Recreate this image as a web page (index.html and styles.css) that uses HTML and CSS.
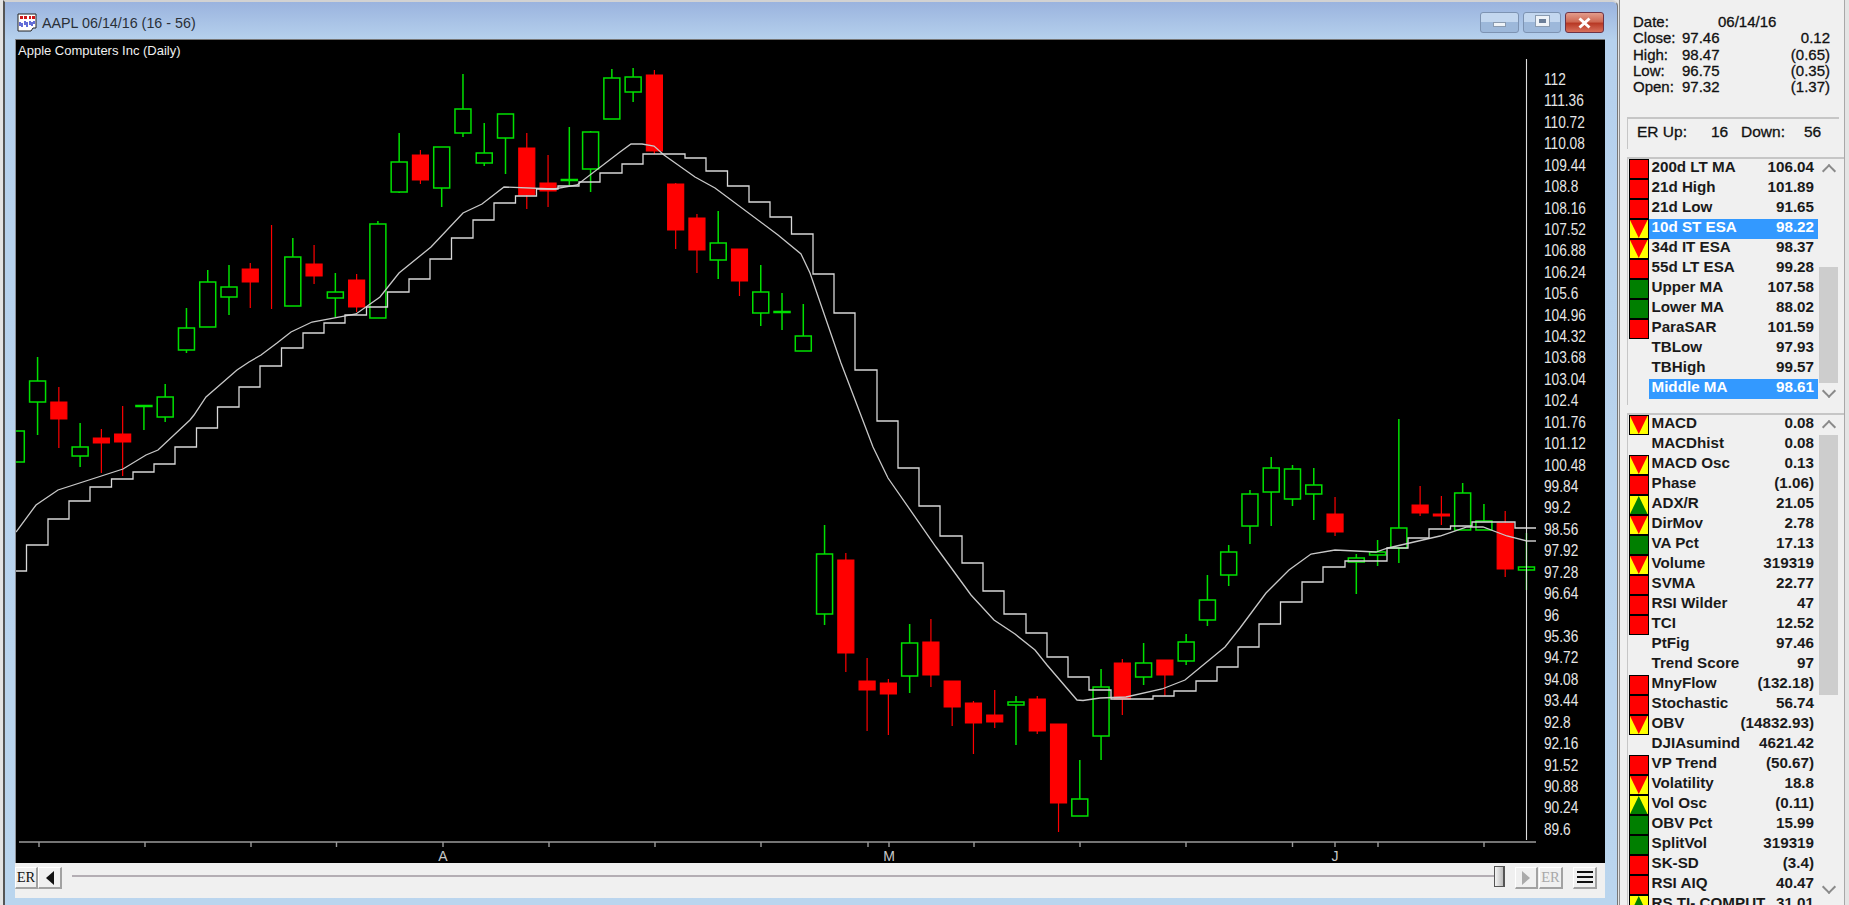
FILE: index.html
```html
<!DOCTYPE html>
<html lang="en">
<head>
    <meta charset="UTF-8">
    <title>AAPL 06/14/16 (16 - 56)</title>
    <link rel="stylesheet" href="styles.css">
</head>
<body>
    <div class="window">
        <div class="titlebar">
            <svg class="app-icon" width="20" height="19" viewBox="0 0 20 19">
                <path d="M1 1h18v14h-3l-2 3H1z" fill="#fff" stroke="#222"/>
                <path d="M3 3h3v3H3zM7 3h3v3H7zM12 3h2v3h-2zM15 3h3v3h-3z" fill="#d01818"/>
                <path d="M3 13V9M5 14V10M8 12V8M10 14V9M13 12V8M15 13V9M17 11V8" stroke="#2030c8" stroke-width="1.4"/>
            </svg>
            <span class="title">AAPL 06/14/16 (16 - 56)</span>
            <div class="controls">
                <div class="ctl ctl-min"><i></i></div>
                <div class="ctl ctl-max"><i></i></div>
                <div class="ctl ctl-close">
                    <svg width="15" height="12" viewBox="0 0 15 12"><path d="M2.5 1.5l10 9M12.5 1.5l-10 9" stroke="#fff" stroke-width="3"/></svg>
                </div>
            </div>
        </div>
        <div class="chart">
            <span class="chart-name">Apple Computers Inc (Daily)</span>
            <svg class="plot" width="1525" height="823" viewBox="16 40 1525 823">
                <g id="candles"></g>
                <path id="ma" class="ma"/>
                <path id="steps" class="steps"/>
                <path class="axis-y" d="M1526.5 59V840"/>
                <path id="ticks" class="axis-x"/>
                <text class="month" x="443" y="861">A</text>
                <text class="month" x="889" y="861">M</text>
                <text class="month" x="1335" y="861">J</text>
            </svg>
            <div class="prices">
                <div>112</div><div>111.36</div><div>110.72</div><div>110.08</div><div>109.44</div><div>108.8</div>
                <div>108.16</div><div>107.52</div><div>106.88</div><div>106.24</div><div>105.6</div><div>104.96</div>
                <div>104.32</div><div>103.68</div><div>103.04</div><div>102.4</div><div>101.76</div><div>101.12</div>
                <div>100.48</div><div>99.84</div><div>99.2</div><div>98.56</div><div>97.92</div><div>97.28</div>
                <div>96.64</div><div>96</div><div>95.36</div><div>94.72</div><div>94.08</div><div>93.44</div>
                <div>92.8</div><div>92.16</div><div>91.52</div><div>90.88</div><div>90.24</div><div>89.6</div>
            </div>
        </div>
        <div class="toolbar">
            <div class="btn btn-er">ER</div>
            <div class="btn"><svg width="10" height="14" viewBox="0 0 10 14"><path d="M9 0v14L1 7z" fill="#111"/></svg></div>
            <div class="track"></div>
            <div class="thumb"></div>
            <div class="btn btn-play"><svg width="10" height="14" viewBox="0 0 10 14"><path d="M1 0v14l8-7z" fill="#aaa"/></svg></div>
            <div class="btn btn-er btn-dim">ER</div>
            <div class="btn btn-menu"><svg width="16" height="13" viewBox="0 0 16 13"><path d="M0 1h16M0 6h16M0 11h16" stroke="#111" stroke-width="2"/></svg></div>
        </div>
    </div>

    <div class="panel">
        <div class="quote">
            <div class="q-row q-date"><span>Date:</span><span>06/14/16</span></div>
            <div class="q-row"><span>Close:</span><span>97.46</span><span>0.12</span></div>
            <div class="q-row"><span>High:</span><span>98.47</span><span>(0.65)</span></div>
            <div class="q-row"><span>Low:</span><span>96.75</span><span>(0.35)</span></div>
            <div class="q-row"><span>Open:</span><span>97.32</span><span>(1.37)</span></div>
        </div>
        <div class="er-box">
            <span>ER Up:</span><span>16</span><span>Down:</span><span>56</span>
        </div>

        <div class="list list-ma">
            <div class="rows">
                <div class="row"><i class="flag red"></i><div class="cell"><span>200d LT MA</span><span>106.04</span></div></div>
                <div class="row"><i class="flag red"></i><div class="cell"><span>21d High</span><span>101.89</span></div></div>
                <div class="row"><i class="flag red"></i><div class="cell"><span>21d Low</span><span>91.65</span></div></div>
                <div class="row"><i class="flag down"></i><div class="cell sel"><span>10d ST ESA</span><span>98.22</span></div></div>
                <div class="row"><i class="flag down"></i><div class="cell"><span>34d IT ESA</span><span>98.37</span></div></div>
                <div class="row"><i class="flag red"></i><div class="cell"><span>55d LT ESA</span><span>99.28</span></div></div>
                <div class="row"><i class="flag green"></i><div class="cell"><span>Upper MA</span><span>107.58</span></div></div>
                <div class="row"><i class="flag green"></i><div class="cell"><span>Lower MA</span><span>88.02</span></div></div>
                <div class="row"><i class="flag red"></i><div class="cell"><span>ParaSAR</span><span>101.59</span></div></div>
                <div class="row"><i class="flag none"></i><div class="cell"><span>TBLow</span><span>97.93</span></div></div>
                <div class="row"><i class="flag none"></i><div class="cell"><span>TBHigh</span><span>99.57</span></div></div>
                <div class="row"><i class="flag none"></i><div class="cell sel"><span>Middle MA</span><span>98.61</span></div></div>
            </div>
            <div class="vscroll">
                <div class="arrow arrow-up"></div>
                <div class="vthumb"></div>
                <div class="arrow arrow-down"></div>
            </div>
        </div>

        <div class="list list-ind">
            <div class="rows">
                <div class="row"><i class="flag down"></i><div class="cell"><span>MACD</span><span>0.08</span></div></div>
                <div class="row"><i class="flag none"></i><div class="cell"><span>MACDhist</span><span>0.08</span></div></div>
                <div class="row"><i class="flag down"></i><div class="cell"><span>MACD Osc</span><span>0.13</span></div></div>
                <div class="row"><i class="flag red"></i><div class="cell"><span>Phase</span><span>(1.06)</span></div></div>
                <div class="row"><i class="flag up"></i><div class="cell"><span>ADX/R</span><span>21.05</span></div></div>
                <div class="row"><i class="flag down"></i><div class="cell"><span>DirMov</span><span>2.78</span></div></div>
                <div class="row"><i class="flag green"></i><div class="cell"><span>VA Pct</span><span>17.13</span></div></div>
                <div class="row"><i class="flag down"></i><div class="cell"><span>Volume</span><span>319319</span></div></div>
                <div class="row"><i class="flag red"></i><div class="cell"><span>SVMA</span><span>22.77</span></div></div>
                <div class="row"><i class="flag red"></i><div class="cell"><span>RSI Wilder</span><span>47</span></div></div>
                <div class="row"><i class="flag red"></i><div class="cell"><span>TCI</span><span>12.52</span></div></div>
                <div class="row"><i class="flag none"></i><div class="cell"><span>PtFig</span><span>97.46</span></div></div>
                <div class="row"><i class="flag none"></i><div class="cell"><span>Trend Score</span><span>97</span></div></div>
                <div class="row"><i class="flag red"></i><div class="cell"><span>MnyFlow</span><span>(132.18)</span></div></div>
                <div class="row"><i class="flag red"></i><div class="cell"><span>Stochastic</span><span>56.74</span></div></div>
                <div class="row"><i class="flag down"></i><div class="cell"><span>OBV</span><span>(14832.93)</span></div></div>
                <div class="row"><i class="flag none"></i><div class="cell"><span>DJIAsumind</span><span>4621.42</span></div></div>
                <div class="row"><i class="flag red"></i><div class="cell"><span>VP Trend</span><span>(50.67)</span></div></div>
                <div class="row"><i class="flag down"></i><div class="cell"><span>Volatility</span><span>18.8</span></div></div>
                <div class="row"><i class="flag up"></i><div class="cell"><span>Vol Osc</span><span>(0.11)</span></div></div>
                <div class="row"><i class="flag green"></i><div class="cell"><span>OBV Pct</span><span>15.99</span></div></div>
                <div class="row"><i class="flag green"></i><div class="cell"><span>SplitVol</span><span>319319</span></div></div>
                <div class="row"><i class="flag red"></i><div class="cell"><span>SK-SD</span><span>(3.4)</span></div></div>
                <div class="row"><i class="flag red"></i><div class="cell"><span>RSI AIQ</span><span>40.47</span></div></div>
                <div class="row"><i class="flag up"></i><div class="cell"><span>RS TI- COMPUT</span><span>31.01</span></div></div>
            </div>
            <div class="vscroll">
                <div class="arrow arrow-up"></div>
                <div class="vthumb"></div>
                <div class="arrow arrow-down"></div>
            </div>
        </div>
    </div>
    <script src="chart.js"></script>
</body>
</html>
```
FILE: styles.css
```css
* {
    box-sizing: border-box;
}
html, body {
    margin: 0;
    height: 905px;
    overflow: hidden;
}
body {
    display: flex;
    background: #e4e4e4;
    font-family: "Liberation Sans", Arial, sans-serif;
    color: #111;
}

/* chart window */
.window {
    width: 1615px;
    flex-shrink: 0;
    height: 905px;
    margin-left: 3px;
    padding: 0 12px 7px 10px;
    display: flex;
    flex-direction: column;
    border-left: 2px solid #555;
    border-right: 1px solid #777;
    border-top: 2px solid #d2d2d2;
    border-top-right-radius: 6px;
    background: linear-gradient(#9ab3de, #b6d1ed 38px, #bad5ee);
}
.titlebar {
    height: 37px;
    display: flex;
    align-items: flex-start;
    flex-shrink: 0;
}
.app-icon {
    margin: 11px 0 0 2px;
}
.title {
    margin: 13px 0 0 5px;
    font-size: 14.3px;
    line-height: 17px;
    color: #2a3038;
}
.controls {
    margin: 10px 1px 0 auto;
    display: flex;
    gap: 4px;
}
.ctl {
    width: 39px;
    height: 21px;
    border: 1px solid #7d93b2;
    border-radius: 3px;
    display: flex;
    align-items: center;
    justify-content: center;
    background: linear-gradient(#c3d7ef 50%, #9db8da 50%);
}
.ctl-max {
    width: 38px;
}
.ctl-close {
    border-color: #6e3346;
    background: linear-gradient(#e39c8b, #cf6a55 45%, #b83a26 55%, #d8705c);
}
.ctl-min i {
    width: 13px;
    height: 5px;
    margin-top: 4px;
    background: #eef3f8;
    border: 1px solid #8a9bb0;
}
.ctl-max i {
    width: 13px;
    height: 10px;
    margin-bottom: 3px;
    border: 3px solid #eef3f8;
    outline: 1px solid #8a9bb0;
    background: #6c7f99;
}

.chart {
    position: relative;
    height: 824px;
    flex-shrink: 0;
    display: flex;
    background: #000;
    border-top: 1px solid #777;
    border-left: 1px solid #8c9097;
}
.chart-name {
    position: absolute;
    left: 2px;
    top: 3px;
    font-size: 13px;
    line-height: 15px;
    color: #f0f0f0;
}
.plot {
    flex-shrink: 0;
    display: block;
}
.candle-up {
    fill: #000;
    stroke: #00e000;
    stroke-width: 1.5;
}
.candle-down {
    fill: #f00;
    stroke: #f00;
    stroke-width: 1.2;
}
.ma {
    fill: none;
    stroke: #c8c8c8;
    stroke-width: 1.3;
}
.steps {
    fill: none;
    stroke: #d8d8d8;
    stroke-width: 1.3;
}
.axis-y {
    stroke: #ddd;
    stroke-width: 1.1;
}
.axis-x {
    fill: none;
    stroke: #9a9a9a;
    stroke-width: 1.4;
}
.month {
    fill: #c8c8c8;
    font-size: 14px;
    text-anchor: middle;
}
.prices {
    padding: 29px 0 0 3px;
    color: #e6e6e6;
    font-size: 13.7px;
}
.prices div {
    height: 21.43px;
    line-height: 21.43px;
    transform: scaleY(1.2);
}

/* bottom scroller */
.toolbar {
    height: 35px;
    flex-shrink: 0;
    display: flex;
    align-items: flex-start;
    margin-left: 0;
    padding: 4px 8px 0 0;
    background: #f0f0f0;
}
.btn {
    width: 24px;
    height: 22px;
    flex-shrink: 0;
    display: flex;
    align-items: center;
    justify-content: center;
    background: #f0f0f0;
    border-top: 1px solid #fff;
    border-left: 1px solid #fff;
    border-right: 2px solid #a2a2a2;
    border-bottom: 2px solid #a2a2a2;
}
.btn-er {
    width: 23px;
    font-family: "Liberation Serif", serif;
    font-size: 14.5px;
}
.btn-dim {
    width: 24px;
    margin-left: 1px;
    color: #a8a8a8;
}
.btn-play {
    width: 23px;
    margin-left: 10px;
}
.btn-menu {
    margin-left: 10px;
}
.track {
    flex: 1;
    height: 2px;
    margin: 8px 0 0 10px;
    background: #b4aeb4;
}
.thumb {
    width: 11px;
    height: 21px;
    margin-top: -1px;
    background: linear-gradient(90deg, #f4f4f4, #bcbcbc);
    border: 1px solid #555;
    border-right-width: 2px;
}

/* right side panel */
.panel {
    width: 226px;
    flex-shrink: 0;
    height: 905px;
    margin-left: 1px;
    overflow: hidden;
    background: #f0f0f0;
    border-left: 1px solid #8b8b8b;
    border-right: 1px solid #a8a8a8;
}
.quote {
    height: 117px;
    padding: 14px 14px 0 13px;
    font-size: 15px;
    line-height: 16.25px;
    -webkit-text-stroke: 0.3px #111;
}
.q-row {
    display: grid;
    grid-template-columns: 49px 1fr auto;
}
.q-date span:nth-child(2) {
    margin-left: 36px;
}
.er-box {
    height: 32px;
    margin: 0 5px 0 7px;
    padding: 0 0 4px 9px;
    display: grid;
    grid-template-columns: 74px 30px 63px auto;
    align-items: center;
    border-top: 2px solid #c6c6c6;
    border-left: 1px solid #c6c6c6;
    font-size: 15.5px;
    -webkit-text-stroke: 0.3px #111;
}
.list {
    display: flex;
    margin: 8px 0 0 7px;
    border-top: 2px solid #c6c6c6;
    border-left: 1px solid #c6c6c6;
}
.list-ma {
    height: 248px;
}
.rows {
    width: 190px;
    flex-shrink: 0;
    padding-left: 1px;
}
.row {
    display: flex;
    height: 20px;
}
.flag {
    position: relative;
    display: block;
    width: 19.5px;
    height: 20px;
    flex-shrink: 0;
    border: 1px solid #000;
    overflow: hidden;
}
.flag.red {
    background: #f00;
}
.flag.green {
    background: #007f00;
}
.flag.none {
    border-color: transparent;
}
.flag.down, .flag.up {
    background: #ff0;
}
.flag.down::after, .flag.up::after {
    content: "";
    position: absolute;
    left: 0;
    top: 0;
    right: 0;
    bottom: 0;
}
.flag.down::after {
    background: #f00;
    clip-path: polygon(0 0, 100% 0, 50% 100%);
}
.flag.up::after {
    background: #007f00;
    clip-path: polygon(50% 0, 100% 100%, 0 100%);
}
.cell {
    flex: 1;
    display: flex;
    justify-content: space-between;
    padding: 0 4px 4px 3px;
    font-size: 15.2px;
    font-weight: 700;
    line-height: 16px;
    white-space: nowrap;
    color: #1a1a1a;
}
.cell.sel {
    background: #39f;
    color: #fff;
}
.vscroll {
    width: 19px;
    margin-left: 1px;
    flex-shrink: 0;
}
.vthumb {
    background: #cdcdcd;
}
.list-ma .vthumb {
    height: 116px;
    margin-top: 88px;
}
.list-ind .vthumb {
    height: 260px;
}
.list-ind .arrow-down {
    margin-top: 184px;
}
.arrow {
    height: 20px;
    display: flex;
    align-items: center;
    justify-content: center;
}
.arrow::before {
    content: "";
    width: 8px;
    height: 8px;
    border-top: 2px solid #8a8a8a;
    border-left: 2px solid #8a8a8a;
}
.arrow-up::before {
    transform: translateY(2px) rotate(45deg);
}
.arrow-down::before {
    transform: translateY(-2px) rotate(225deg);
}
```
FILE: chart.js
```js
// page coordinates of the daily bars: [type, wick top, wick bottom, body top, body bottom]
const firstX = 16.3;
const barGap = 21.27;
const bars = [
    ['u', 431, 462, 431, 462], ['u', 357, 435, 381, 402], ['d', 387, 448, 402, 419], ['u', 423, 467, 447, 456],
    ['d', 429, 473, 438, 443], ['d', 406, 476, 434, 442], ['u', 406, 430, 405.5, 406.5], ['u', 384, 422, 397, 417],
    ['u', 308, 353, 328, 350], ['u', 270, 327, 282, 327], ['u', 265, 315, 287, 297], ['d', 263, 308, 269, 282],
    ['d', 225, 309, null, null], ['u', 238, 306, 257, 306], ['d', 245, 284, 264, 276], ['u', 273, 317, 292, 298],
    ['d', 274, 312, 280, 307], ['u', 221, 318, 224, 318], ['u', 133, 193, 162, 192], ['d', 150, 184, 155, 180],
    ['u', 147, 207, 147, 188], ['u', 74, 137, 109, 133], ['u', 123, 166, 153, 163], ['u', 114, 174, 114, 138],
    ['d', 133, 209, 148, 195], ['d', 155, 207, 183, 191], ['u', 127, 185, 179.5, 180.5], ['u', 131, 192, 132, 169],
    ['u', 69, 119, 78, 119], ['u', 68, 102, 77, 92], ['d', 70, 154, 75, 151], ['d', 183, 249, 184, 230],
    ['d', 214, 273, 218, 250], ['u', 211, 279, 243, 260], ['d', 249, 296, 249, 281], ['u', 265, 326, 292, 313],
    ['u', 293, 330, 311.5, 312.5], ['u', 304, 351, 336, 351], ['u', 525, 625, 554, 614], ['d', 553, 672, 560, 653],
    ['d', 658, 731, 681, 690], ['d', 679, 735, 683, 694], ['u', 624, 693, 643, 676], ['d', 619, 687, 642, 675],
    ['d', 681, 726, 681, 707], ['d', 701, 754, 703, 723], ['d', 690, 728, 715, 722], ['u', 696, 745, 702, 705],
    ['d', 696, 734, 699, 731], ['d', 724, 832, 724, 803], ['u', 760, 816, 799, 816], ['u', 669, 760, 687, 736],
    ['d', 659, 715, 663, 699], ['u', 643, 685, 663, 677], ['d', 660, 696, 660, 675], ['u', 634, 665, 642, 661],
    ['u', 575, 626, 600, 620], ['u', 545, 586, 552, 575], ['u', 490, 544, 494, 526], ['u', 457, 526, 468, 492],
    ['u', 465, 506, 469, 499], ['u', 468, 520, 485, 494], ['d', 497, 536, 514, 532], ['u', 554, 594, 558, 562],
    ['u', 540, 566, 552, 555], ['u', 419, 563, 528, 548], ['d', 486, 516, 505, 513], ['d', 496, 525, 514, 516],
    ['u', 483, 530, 493, 530], ['u', 504, 530, 521, 530], ['d', 511, 577, 523, 569], ['u', 533, 590, 567, 570]
];

const maPoints = [
    [16, 532], [36, 505], [58, 490], [123, 469], [146, 455], [158, 450], [190, 420], [194, 415], [206, 397],
    [217.5, 387], [237, 370], [249, 362], [261, 355], [277, 343], [291, 332], [312, 322], [356, 314], [380, 297],
    [399, 273], [431, 247], [463, 213], [482, 204], [504, 187], [554, 189], [577, 185], [620, 152], [631, 144],
    [642, 144], [654, 146], [664, 155], [695, 177], [715, 188], [778, 235], [801, 254], [810, 273], [841, 363],
    [873, 447], [888, 478], [936, 547], [971, 595], [994, 620], [1015, 634], [1035, 650], [1047, 665], [1077, 700],
    [1083, 700.5], [1100, 698], [1126, 697], [1162, 689], [1185, 680], [1225, 647], [1240, 628], [1266, 593],
    [1289, 570], [1311, 554], [1335, 550], [1376, 552], [1388, 548], [1440, 536], [1467, 527], [1483, 527],
    [1507, 536], [1527, 541], [1536, 541]
];

// stepped band: run right to x, then move to y
const stepPoints = [
    [26.5, 545], [48, 519], [69, 501], [90, 487], [111.5, 479], [133, 472], [154, 464], [175, 447], [196.5, 428],
    [217.5, 407], [239, 387], [260, 366], [281.5, 348], [303, 333], [324, 323], [345, 315], [366.5, 307],
    [387.5, 292], [409, 279], [430, 259], [451.5, 238], [473, 220], [494, 203], [515.5, 196], [536.5, 189],
    [558, 186], [579, 182], [600, 173], [622, 164], [643, 154], [685, 158], [706, 171], [727.5, 186], [749, 202],
    [770, 217], [791.5, 234], [813, 274], [834, 313], [855, 370], [877, 421], [898, 468], [919, 506], [940, 536],
    [962, 563], [983, 591], [1004, 614], [1026, 633], [1047, 657], [1068, 677], [1089, 690], [1111, 699],
    [1153, 696], [1174, 691], [1196, 681], [1217, 667], [1238, 647], [1259, 624], [1280.5, 602], [1302, 582],
    [1323, 567], [1345, 561], [1387, 548], [1408, 538], [1429, 529], [1450.5, 526], [1472, 522], [1515, 528],
    [1536, 528]
];

const tickXs = [39, 145, 251, 336.5, 443, 549, 655, 761, 868, 889, 974, 1080, 1186, 1292.5, 1335, 1378, 1484];

const svgNS = 'http://www.w3.org/2000/svg';
const candleGroup = document.getElementById('candles');

function addPath(d, className) {
    const path = document.createElementNS(svgNS, 'path');
    path.setAttribute('d', d);
    path.setAttribute('class', className);
    candleGroup.appendChild(path);
}

bars.forEach((bar, i) => {
    const [type, wickTop, wickBottom, bodyTop, bodyBottom] = bar;
    const x = firstX + i * barGap;
    const className = type === 'u' ? 'candle-up' : 'candle-down';
    addPath(`M${x} ${wickTop}V${wickBottom}`, className);
    if (bodyTop !== null) {
        addPath(`M${x - 8} ${bodyTop}h16V${bodyBottom}h-16z`, className);
    }
});

document.getElementById('ma').setAttribute('d', 'M' + maPoints.map(p => p.join(' ')).join('L'));
document.getElementById('steps').setAttribute('d', 'M16 571' + stepPoints.map(p => `H${p[0]}V${p[1]}`).join(''));
document.getElementById('ticks').setAttribute('d', 'M19 842H1536' + tickXs.map(x => `M${x} 842v5`).join(''));
```
